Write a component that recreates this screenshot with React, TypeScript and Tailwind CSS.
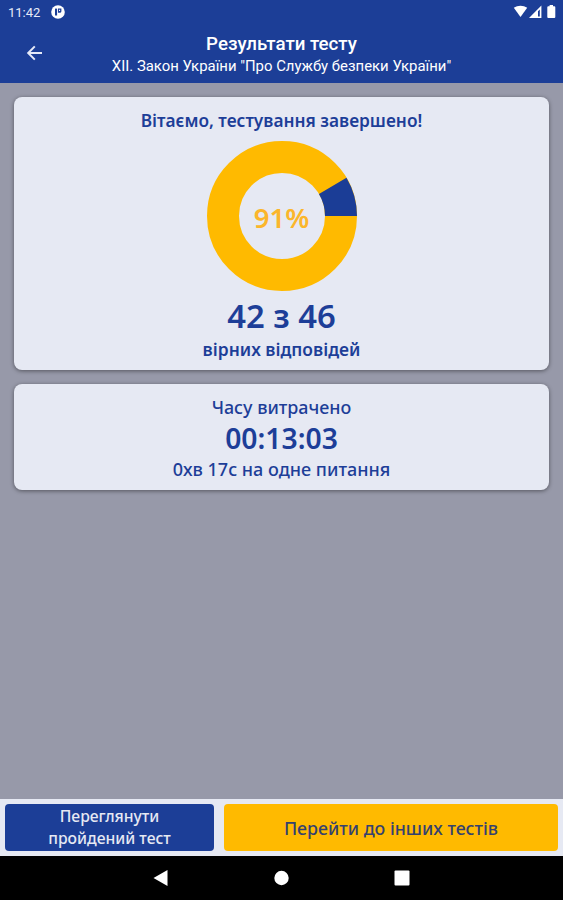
import React from 'react';

const StatusIcons = () => (
  <svg width="44" height="16" viewBox="0 0 44 16" fill="white">
    <path d="M0.8 3.8C4.7 1 10.3 1 14.2 3.8L7.5 13Z" />
    <path fillRule="evenodd" d="M28.4 1.6V14H16ZM26.8 5.4L25 7.2V12.6H26.8Z" />
    <path d="M35.3 2.2h1.3V1h3.4v1.2h1.3a1 1 0 0 1 1 1V13a1 1 0 0 1-1 1h-6a1 1 0 0 1-1-1V3.2a1 1 0 0 1 1-1Z" />
  </svg>
);

const ResultChart = ({ correct, total }: { correct: number; total: number }) => {
  const length = 2 * Math.PI * 59;
  const wrong = ((total - correct) / total) * length;

  return (
    <div className="relative mt-[9px] flex h-[150px] w-[150px] items-center justify-center">
      <svg className="absolute inset-0" width="150" height="150" viewBox="0 0 150 150" fill="none">
        <circle cx="75" cy="75" r="59" stroke="#ffba00" strokeWidth="32" />
        <circle
          cx="75"
          cy="75"
          r="59"
          stroke="#1b3d96"
          strokeWidth="32"
          strokeDasharray={`${wrong} ${length - wrong}`}
          strokeDashoffset={wrong}
        />
      </svg>
      <span className="relative pt-[3px] text-[27.5px] leading-8 font-semibold text-[#fbb62b]">
        {Math.floor((correct / total) * 100)}%
      </span>
    </div>
  );
};

const App = () => {
  return (
    <div className="flex h-[900px] w-[563px] flex-col overflow-hidden bg-[#9799a9] font-['Noto_Sans','Open_Sans',sans-serif] text-[#1d3e98]">
      <header className="h-[83px] bg-[#1c3e97] font-[Roboto,sans-serif] text-white">
        <div className="flex h-6 items-center justify-between pr-[6px] pl-2 text-[13px] text-[#e6eaf8]">
          <div className="flex items-center gap-[10px]">
            <span className="pt-px">11:42</span>
            <svg className="ml-px" width="14" height="14" viewBox="0 0 14 14">
              <circle cx="7" cy="7" r="6.8" fill="white" />
              <path d="M4 3.6h2.1v6.9H4Z" fill="#1c3e97" />
              <path d="M7 3.4h3.4v2.8a1.6 1.6 0 0 1-1.6 1.6H7Z" fill="#1c3e97" />
              <path d="M8 4.7h1.1v1.4H8Z" fill="white" />
            </svg>
          </div>
          <StatusIcons />
        </div>
        <div className="flex px-[25px] pt-[9px]">
          <svg className="mt-[11px] h-[18px] w-[18px]" viewBox="0 0 18 18" fill="none" stroke="#e6eaf8" strokeWidth="2">
            <path d="M17 9H3M9.8 2.4L3.2 9L9.8 15.6" />
          </svg>
          <div className="flex flex-1 flex-col items-center pr-[18px] whitespace-nowrap">
            <h1 className="text-[18.7px] leading-[22px] font-medium">Результати тесту</h1>
            <p className="text-[14.9px] leading-[22px]">XII. Закон України "Про Службу безпеки України"</p>
          </div>
        </div>
      </header>

      <main className="flex flex-1 flex-col gap-[14px] px-[14px] pt-[14px] text-center">
        <section className="flex h-[273px] flex-col items-center rounded-lg bg-[#e6e9f3] shadow-[0_1px_4px_rgba(0,0,0,0.45)]">
          <h2 className="pt-3 text-[17.3px] leading-[23px] font-semibold">Вітаємо, тестування завершено!</h2>
          <ResultChart correct={42} total={46} />
          <p className="mt-[5px] text-[32.8px] leading-10 font-semibold">42 з 46</p>
          <p className="mt-px text-[17.4px] leading-6 font-semibold">вірних відповідей</p>
        </section>

        <section className="flex h-[106px] flex-col items-center rounded-lg bg-[#e6e9f3] shadow-[0_1px_4px_rgba(0,0,0,0.45)]">
          <h2 className="pt-[11px] text-[17.9px] leading-6 font-medium">Часу витрачено</h2>
          <p className="mt-[2px] text-[28.3px] leading-[34px] font-semibold">00:13:03</p>
          <p className="mt-[2px] text-[18px] leading-6 font-medium">0хв 17с на одне питання</p>
        </section>
      </main>

      <footer className="flex h-[57px] gap-[10px] bg-[#e6e9f3] p-[5px]">
        <button className="h-[47px] w-[209px] rounded bg-[#1c3e97] pb-px text-[15.7px] leading-[22px] font-medium text-[#e6e9f3]">
          Переглянути
          <br />
          пройдений тест
        </button>
        <button className="h-[47px] flex-1 rounded bg-[#ffba00] pt-px text-[17.75px] font-medium text-[#34416f]">
          Перейти до інших тестів
        </button>
      </footer>

      <nav className="h-11 bg-black">
        <svg width="563" height="44" viewBox="0 0 563 44" fill="white">
          <path d="M153.5 22L167.5 14V30Z" />
          <circle cx="281.5" cy="22" r="7.2" />
          <rect x="394.5" y="14.5" width="15" height="15" rx="1" />
        </svg>
      </nav>
    </div>
  );
};

export default App;
